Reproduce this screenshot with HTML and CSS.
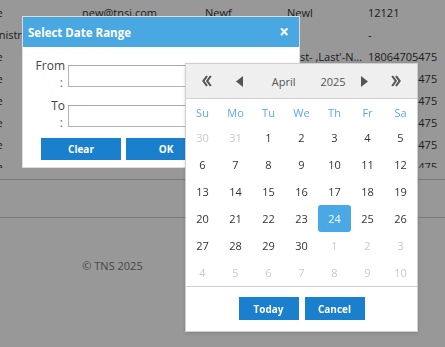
FILE: index.html
```html
<!DOCTYPE html>
<html lang="en">

<head>
    <meta charset="UTF-8" />
    <meta name="viewport" content="width=device-width, initial-scale=1.0" />
    <title>Users | TNS</title>
    <link rel="stylesheet" href="styles.css">
</head>

<body>
    <div class="page">
        <div class="table-scroll">
            <table class="users">
                <colgroup>
                    <col style="width: 110px">
                    <col style="width: 123px">
                    <col style="width: 82px">
                    <col style="width: 81px">
                    <col style="width: 100px">
                </colgroup>
                <tbody>
                    <tr><td>Active</td><td>new@tnsi.com</td><td>Newf</td><td>Newl</td><td>12121</td></tr>
                    <tr><td>Administrator</td><td>admin@tnsi.com</td><td>Admin</td><td></td><td>-</td></tr>
                    <tr><td>Active</td><td>first@tnsi.com</td><td>First</td><td>First- ,Last'-Name-Test</td><td>18064705475</td></tr>
                    <tr><td>Active</td><td>user2@tnsi.com</td><td>John</td><td>Smith</td><td>18064705475</td></tr>
                    <tr><td>Active</td><td>user3@tnsi.com</td><td>Jane</td><td>Doe</td><td>18064705475</td></tr>
                    <tr><td>Active</td><td>user4@tnsi.com</td><td>Mark</td><td>Lee</td><td>18064705475</td></tr>
                    <tr><td>Active</td><td>user5@tnsi.com</td><td>Anna</td><td>Bell</td><td>18064705475</td></tr>
                    <tr><td>Active</td><td>user6@tnsi.com</td><td>Paul</td><td>King</td><td>18064705475</td></tr>
                </tbody>
            </table>
        </div>

        <div class="pager"></div>

        <div class="footer">&copy; TNS 2025</div>
    </div>

    <div class="overlay"></div>

    <div class="dialog">
        <div class="dialog-title">
            <span>Select Date Range</span>
            <span class="close">&times;</span>
        </div>
        <div class="dialog-body">
            <div class="field">
                <label class="field-label">From<span class="colon">:</span></label>
                <input type="text" class="field-input">
            </div>
            <div class="field field-to">
                <label class="field-label">To<span class="colon">:</span></label>
                <input type="text" class="field-input">
            </div>
            <div class="dialog-actions">
                <button class="btn">Clear</button>
                <button class="btn">OK</button>
            </div>
        </div>
    </div>

    <div class="calendar">
        <div class="cal-head">
            <span class="nav">
                <svg width="10" height="12" viewBox="0 0 10 12"><path d="M5 1 L1.4 6 L5 11 M8.8 1 L5.2 6 L8.8 11" fill="none" stroke="#555" stroke-width="2.1"/></svg>
            </span>
            <span class="nav">
                <svg width="7" height="11" viewBox="0 0 7 11"><polygon points="7,0 0,5.5 7,11" fill="#555"/></svg>
            </span>
            <span class="cal-month">April</span>
            <span class="cal-year">2025</span>
            <span class="nav">
                <svg width="7" height="11" viewBox="0 0 7 11"><polygon points="0,0 7,5.5 0,11" fill="#555"/></svg>
            </span>
            <span class="nav">
                <svg width="10" height="12" viewBox="0 0 10 12"><path d="M1.2 1 L4.8 6 L1.2 11 M5 1 L8.6 6 L5 11" fill="none" stroke="#555" stroke-width="2.1"/></svg>
            </span>
        </div>
        <div class="cal-grid" id="calGrid">
            <span class="dow">Su</span><span class="dow">Mo</span><span class="dow">Tu</span><span class="dow">We</span><span class="dow">Th</span><span class="dow">Fr</span><span class="dow">Sa</span>
        </div>
        <div class="cal-foot">
            <button class="btn btn-small">Today</button>
            <button class="btn btn-small">Cancel</button>
        </div>
    </div>

    <script>
        // April 2025 starts on a Tuesday
        const grid = document.getElementById("calGrid");
        const days = [];
        [30, 31].forEach(d => days.push({ d: d, other: true }));
        for (let d = 1; d <= 30; d++) days.push({ d: d, other: false });
        for (let d = 1; days.length < 42; d++) days.push({ d: d, other: true });

        days.forEach(item => {
            const cell = document.createElement("span");
            cell.className = "day";
            if (item.other) cell.classList.add("other");
            if (!item.other && item.d === 24) cell.classList.add("selected");
            cell.textContent = item.d;
            grid.appendChild(cell);
        });
    </script>
</body>

</html>
```

FILE: styles.css
```css
body {
    font-family: 'Open Sans', 'Noto Sans', sans-serif;
    background-color: #ffffff;
    color: #333;
    margin: 0;
    padding: 0;
    overflow: hidden;
}

.page {
    width: 445px;
    height: 347px;
}

.table-scroll {
    height: 168px;
    overflow: hidden;
}

.users {
    width: 496px;
    table-layout: fixed;
    border-collapse: collapse;
    margin-top: 1px;
    margin-left: -28px;
    font-size: 11px;
}

.users td {
    height: 22px;
    padding: 0 3px 0 0;
    white-space: nowrap;
    overflow: hidden;
    text-overflow: ellipsis;
}

.pager {
    margin-top: 11px;
    height: 37px;
    border-top: 1px solid #ccc;
    border-bottom: 1px solid #ccc;
}

.footer {
    width: 225px;
    margin-top: 40px;
    text-align: center;
    font-size: 11px;
    color: #777;
}

.overlay {
    position: fixed;
    top: 0;
    left: 0;
    right: 0;
    bottom: 0;
    background-color: rgba(0, 0, 0, 0.405);
}

/* date range dialog */
.dialog {
    position: absolute;
    top: 16px;
    left: 22px;
    width: 276px;
    background-color: #ffffff;
    border: 1px solid #dcdcdc;
}

.dialog-title {
    display: flex;
    justify-content: space-between;
    align-items: center;
    height: 30px;
    padding: 0 10px 0 5px;
    background-color: #49a7e1;
    color: #ffffff;
    font-size: 11.5px;
    font-weight: bold;
}

.close {
    font-size: 17px;
    line-height: 1;
    margin-top: -2px;
}

.dialog-body {
    padding: 10px 0 7px 0;
}

.field {
    display: flex;
    align-items: flex-start;
    gap: 3px;
}

.field-to {
    margin-top: 6px;
}

.field-label {
    width: 42px;
    text-align: right;
    font-size: 12px;
    line-height: 17px;
    color: #444;
}

.colon {
    display: block;
    padding-right: 2px;
    color: #666;
}

.field-input {
    box-sizing: border-box;
    width: 222px;
    height: 22px;
    margin: 8px 0 0 0;
    border: 1px solid #b4b4b4;
    border-top-color: #a8a8a8;
    background-color: #ffffff;
}

.dialog-actions {
    display: flex;
    gap: 5px;
    margin: 7px 0 0 18px;
}

.btn {
    width: 80px;
    height: 22px;
    padding: 0;
    border: none;
    background-color: #1a7fcc;
    color: #ffffff;
    font-family: 'Open Sans', sans-serif;
    font-size: 10px;
    font-weight: bold;
    cursor: pointer;
}

.btn:hover {
    background-color: #156fb3;
}

/* calendar popup */
.calendar {
    position: absolute;
    top: 63px;
    left: 185px;
    width: 231px;
    background-color: #ffffff;
    border: 1px solid #cfcfcf;
    box-shadow: 0 1px 3px rgba(0, 0, 0, 0.15);
    font-size: 11px;
}

.cal-head {
    display: grid;
    grid-template-columns: 42px 22px 1fr 1fr 22px 42px;
    align-items: center;
    height: 34px;
    background-color: #efefef;
    border-bottom: 1px solid #d0d0d0;
    color: #555;
}

.nav {
    display: flex;
    justify-content: center;
    align-items: center;
}

.cal-month {
    text-align: right;
    padding-right: 6px;
}

.cal-year {
    text-align: left;
    padding-left: 19px;
}

.cal-grid {
    display: grid;
    grid-template-columns: repeat(7, 33px);
    grid-template-rows: 25px repeat(6, 27px);
}

.dow {
    display: flex;
    justify-content: center;
    align-items: center;
    padding-top: 2px;
    color: #58aae8;
}

.day {
    display: flex;
    justify-content: center;
    align-items: center;
    color: #333;
    border-radius: 3px;
}

.day.other {
    color: #c9c9c9;
}

.day.selected {
    background-color: #4aa9e4;
    color: #ffffff;
}

.cal-foot {
    display: flex;
    justify-content: center;
    gap: 6px;
    padding: 10px 0 11px 0;
    border-top: 1px solid #d0d0d0;
}

.btn-small {
    width: 60px;
    height: 23px;
}
```
